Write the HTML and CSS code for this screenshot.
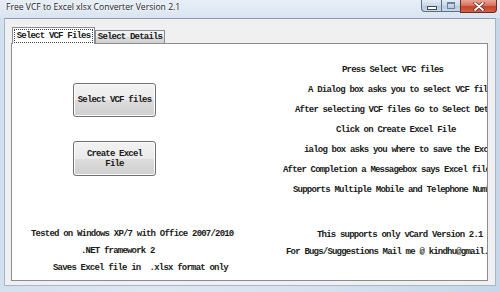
FILE: index.html
```html
<!DOCTYPE html>
<html>
<head>
<meta charset="utf-8">
<link rel="stylesheet" href="styles.css">
</head>
<body>
<div class="window">
  <div class="titlebar">
    <div class="title">Free VCF to Excel xlsx Converter Version 2.1</div>
    <div class="caption">
      <div class="cbtn min"><span class="glyph-min"></span></div>
      <div class="cbtn max"><span class="glyph-max"></span></div>
      <div class="cbtn close">
        <svg width="12" height="9" viewBox="0 0 12 9">
          <path d="M2 1 L10 8 M10 1 L2 8" stroke="#5a2018" stroke-width="3.2" stroke-linecap="round"/>
          <path d="M2 1 L10 8 M10 1 L2 8" stroke="#ffffff" stroke-width="1.8" stroke-linecap="round"/>
        </svg>
      </div>
    </div>
  </div>
  <div class="client">
    <div class="tabs">
      <div class="tab active"><span class="focus">Select VCF Files</span></div>
      <div class="tab">Select Details</div>
    </div>
    <div class="page">
      <div class="left">
        <div class="buttons">
          <div class="btn">Select VCF files</div>
          <div class="btn tall">Create Excel<br>File</div>
        </div>
        <div class="notes">
          <div class="note n1">Tested on Windows XP/7 with Office 2007/2010</div>
          <div class="note n2">.NET framework 2</div>
          <div class="note n3">Saves Excel file in  .xlsx format only</div>
        </div>
      </div>
      <div class="right">
        <div class="steps">
          <div class="step s1">Press Select VFC files</div>
          <div class="step s2">A Dialog box asks you to select VCF files</div>
          <div class="step s3">After selecting VCF files Go to Select Details</div>
          <div class="step s4">Click on Create Excel File</div>
          <div class="step s5">ialog box asks you where to save the Excel file</div>
          <div class="step s6">After Completion a Messagebox says Excel file created</div>
          <div class="step s7">Supports Multiple Mobile and Telephone Numbers</div>
        </div>
        <div class="notes">
          <div class="note r1">This supports only vCard Version 2.1</div>
          <div class="note r2">For Bugs/Suggestions Mail me @ kindhu@gmail.com</div>
        </div>
      </div>
    </div>
  </div>
</div>
</body>
</html>
```
FILE: styles.css
```css
html, body {
  margin: 0;
  padding: 0;
}
body {
  width: 500px;
  height: 292px;
  overflow: hidden;
}
.window {
  width: 500px;
  height: 292px;
  display: flex;
  flex-direction: column;
  background: linear-gradient(90deg, #d3e0ee 0%, #dde7f2 30%, #d6e2ef 60%, #c6d7ea 100%);
}
.titlebar {
  height: 18px;
  display: flex;
  justify-content: space-between;
  align-items: flex-start;
  background: linear-gradient(180deg, #e6eef7 0%, #dae5f1 100%);
}
.title {
  padding-left: 6px;
  line-height: 15px;
  font-family: "Open Sans", "Noto Sans", sans-serif;
  font-size: 8.6px;
  color: #1c1c1c;
  white-space: nowrap;
  text-shadow: 0 0 4px #ffffff, 0 0 2px #ffffff;
}
.caption {
  display: flex;
  margin-right: 3px;
}
.cbtn {
  height: 12px;
  box-sizing: border-box;
  border: 1px solid #5d6f86;
  border-top: none;
  display: flex;
  align-items: center;
  justify-content: center;
}
.min {
  width: 20px;
  border-radius: 0 0 0 4px;
  background: linear-gradient(180deg, #e4ecf5 0%, #cbd8e8 50%, #b7c8dd 51%, #c9d8ea 100%);
  border-right: none;
}
.max {
  width: 19px;
  background: linear-gradient(180deg, #e4ecf5 0%, #cbd8e8 50%, #b7c8dd 51%, #c9d8ea 100%);
  border-right: none;
}
.close {
  width: 37px;
  height: 13px;
  border-radius: 0 0 4px 0;
  border-color: #6b2a22;
  background: linear-gradient(180deg, #e8a595 0%, #d9735f 45%, #c7432c 55%, #d0624a 100%);
}
.glyph-min {
  display: block;
  width: 8px;
  height: 2px;
  margin-top: 4px;
  background: #ffffff;
  border: 1px solid #3d4a5a;
}
.glyph-max {
  display: block;
  width: 6px;
  height: 4px;
  border: 1px solid #6f8096;
  border-top-width: 2px;
  background: transparent;
}
.client {
  flex: 1;
  margin: 0 4px 6px 4px;
  background: #f0f0f0;
  border-top: 1px solid #8a9cb3;
  border-left: 1px solid #a6b6ca;
  border-right: 1px solid #a6b6ca;
  border-bottom: 1px solid #a6b6ca;
  padding: 8px 7px 4px 6px;
  display: flex;
  flex-direction: column;
  font-family: "Liberation Mono", monospace;
  font-size: 9px;
  font-weight: bold;
  letter-spacing: -0.8px;
  color: #1a1a1a;
}
.tabs {
  height: 16px;
  display: flex;
  align-items: flex-end;
  position: relative;
  z-index: 1;
}
.tab {
  box-sizing: border-box;
  height: 13px;
  width: 70px;
  border: 1px solid #898c95;
  border-bottom: none;
  background: linear-gradient(180deg, #f3f3f3 0%, #ebebeb 50%, #dddddd 51%, #cfcfcf 100%);
  display: flex;
  align-items: center;
  justify-content: center;
  white-space: nowrap;
  margin-bottom: 0;
}
.tab.active {
  width: 83px;
  height: 17px;
  margin-left: 1px;
  margin-bottom: -1px;
  background: #ffffff;
}
.focus {
  box-sizing: border-box;
  height: 14px;
  line-height: 12px;
  padding: 0 2px;
  border: 1px dotted #444444;
}
.page {
  flex: 1;
  border: 1px solid #898c95;
  background: #ffffff;
  display: flex;
}
.left {
  width: 271px;
  display: flex;
  flex-direction: column;
  padding-bottom: 3px;
}
.buttons {
  padding-top: 39px;
  padding-left: 61px;
  display: flex;
  flex-direction: column;
  gap: 24px;
}
.btn {
  box-sizing: border-box;
  width: 83px;
  height: 34px;
  border: 1px solid #707070;
  border-radius: 3px;
  box-shadow: inset 0 0 0 1px #fcfcfc;
  background: linear-gradient(180deg, #f2f2f2 0%, #ebebeb 50%, #dddddd 51%, #cfcfcf 100%);
  display: flex;
  align-items: center;
  justify-content: center;
  text-align: center;
  line-height: 10px;
  white-space: nowrap;
}
.btn.tall {
  height: 35px;
}
.notes {
  margin-top: auto;
}
.note {
  height: 17px;
  line-height: 17px;
  white-space: pre;
}
.n1 { padding-left: 19px; }
.n2 { padding-left: 69px; }
.n3 { padding-left: 41px; }
.right {
  width: 204px;
  overflow: hidden;
  display: flex;
  flex-direction: column;
  padding-bottom: 19px;
}
.steps {
  padding-top: 16px;
}
.step {
  height: 20px;
  line-height: 20px;
  white-space: nowrap;
}
.s1 { padding-left: 59px; }
.s2 { padding-left: 25px; }
.s3 { padding-left: 12px; }
.s4 { padding-left: 53px; }
.s5 { padding-left: 21px; }
.s6 { padding-left: 0; }
.s7 { padding-left: 10px; }
.r1 { padding-left: 34px; }
.r2 { padding-left: 3px; }
```
